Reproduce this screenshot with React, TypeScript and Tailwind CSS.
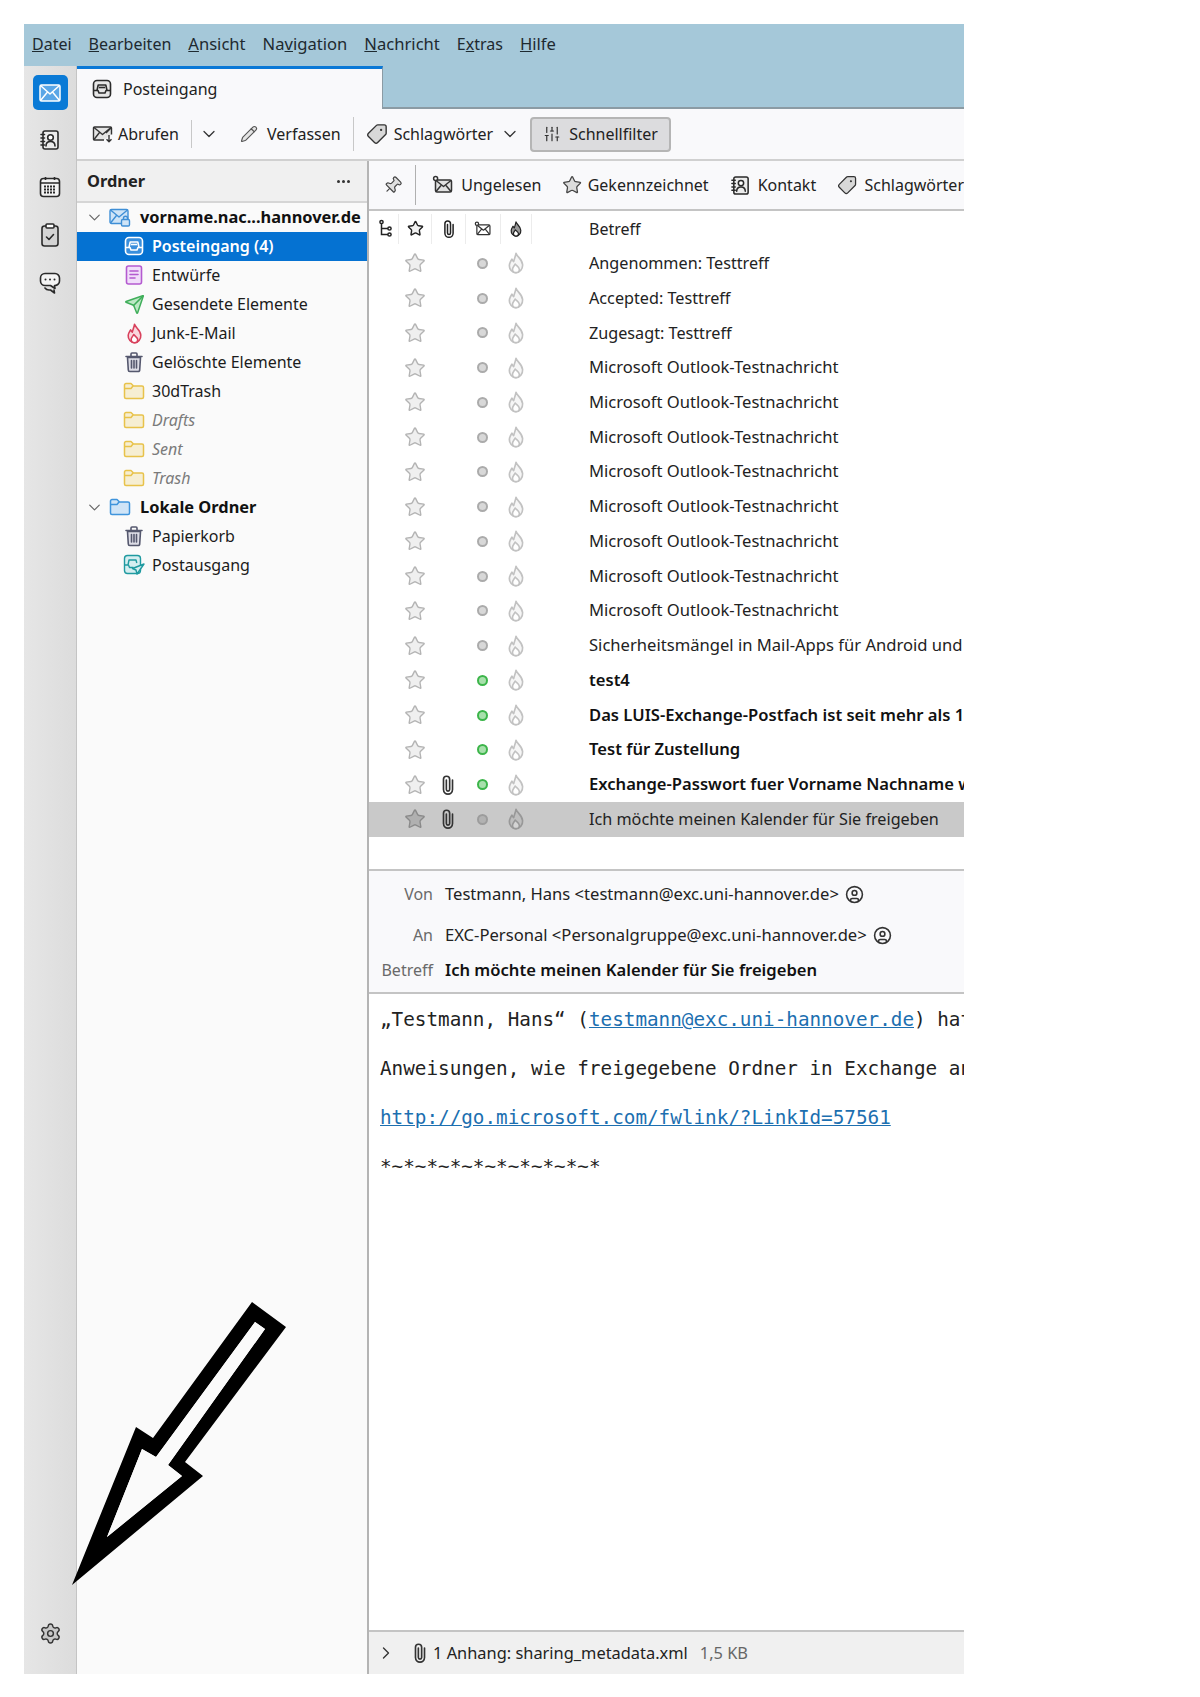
import { ChevronDown, ChevronRight, Settings, Pencil, Tag, Star, Pin, SlidersVertical, Send, CircleUser } from 'lucide-react';

const FONT = 'font-["Noto_Sans","Open_Sans",sans-serif]';

function InboxIcon({ size = 20, color = '#2b2b2b', fill = '#e6e6e6' }: { size?: number; color?: string; fill?: string }) {
  return (
    <svg width={size} height={size} viewBox="0 0 20 20" fill="none" stroke={color} strokeWidth="1.6" strokeLinejoin="round" className="shrink-0">
      <rect x="1.5" y="1.5" width="17" height="17" rx="3.5" fill={fill} />
      <path d="M1.5 11.5h4.5l1 2.5h6l1-2.5h4.5" />
      <path d="M5 11.5l1.2-5.5h7.6l1.2 5.5" />
      <path d="M7 8.5h6" />
    </svg>
  );
}

function ClipIcon({ size = 20, color = '#333' }: { size?: number; color?: string }) {
  return (
    <svg width={size} height={size} viewBox="0 0 20 20" fill="none" stroke={color} strokeWidth="1.5" strokeLinecap="round" className="shrink-0">
      <path d="M8.5 5.5v8.5a1.5 1.5 0 0 0 3 0V4.8a2.8 2.8 0 0 0-5.6 0v9.4a4.1 4.1 0 0 0 8.2 0V5.5" />
    </svg>
  );
}

function FlameIcon({ size = 22, color = '#c2c2c2', fill = '#f6f6f6', inner = '#ffffff' }: { size?: number; color?: string; fill?: string; inner?: string }) {
  return (
    <svg width={size} height={size} viewBox="0 0 20 20" stroke={color} strokeWidth="1.5" strokeLinejoin="round" className="shrink-0">
      <path d="M10 1.2c.8 3 5.6 5.2 6 10.3.3 3.8-2.6 7.3-6 7.3s-6.300-3.100-6-7c.2-2.300 1.400-3.700 2.300-5.300.4 1 1 1.700 1.600 2.200.6-2.500 1.600-4.600 2.100-7.500z" fill={fill} />
      <path d="M10 18.800c-1.800 0-3.200-1.400-3.200-3.100 0-1.700 1.500-2.700 2.400-4.700 1.300 1.600 3.900 2.800 3.900 4.900 0 1.600-1.400 2.900-3.100 2.900z" fill={inner} />
    </svg>
  );
}

function MailFetchIcon() {
  return (
    <svg width="22" height="20" viewBox="0 0 22 20" fill="none" stroke="#333" strokeWidth="1.4" strokeLinejoin="round" className="shrink-0">
      <path d="M12 16H2.500a1 1 0 0 1-1-1V4a1 1 0 0 1 1-1h16a1 1 0 0 1 1 1v6.500" fill="#e4e4e4" />
      <path d="M2 3.500l8.500 7 8.500-7M2 15.500l5.500-7M19 4l-5 5" />
      <path d="M17 11v6.500M14.500 15.200l2.500 2.500 2.500-2.500" />
    </svg>
  );
}

function UnreadIcon({ size = 22, dark = false }: { size?: number; dark?: boolean }) {
  return (
    <svg width={size} height={size} viewBox="0 0 22 22" fill="none" stroke="#333" strokeWidth="1.5" strokeLinejoin="round" className="shrink-0">
      <rect x="3.500" y="6" width="16" height="12" rx="1.500" fill={dark ? '#fff' : '#e2e2e2'} />
      <path d="M4 6.500l7.500 6 7.500-6M4 17.500l5-6M19 17.500l-5-6" />
      <circle cx="3.600" cy="4.600" r="2" fill="#fff" />
    </svg>
  );
}

function ThreadIcon() {
  return (
    <svg width="16" height="20" viewBox="0 0 16 20" fill="none" stroke="#222" strokeWidth="1.500" className="shrink-0">
      <circle cx="3.500" cy="3" r="1.600" />
      <path d="M3.500 4.600V15.500H10M3.500 9.500H10" />
      <circle cx="11.500" cy="9.500" r="1.600" />
      <circle cx="11.500" cy="15.500" r="1.600" />
    </svg>
  );
}

function AccountIcon() {
  return (
    <svg width="22" height="20" viewBox="0 0 22 20" fill="none" stroke="#3f8fd6" strokeWidth="1.400" strokeLinejoin="round" className="shrink-0">
      <rect x="1" y="2.500" width="18" height="14" rx="1.500" fill="#cfe4f7" />
      <path d="M1.500 3l8.500 7 8.500-7M1.500 16l6-7.500" />
      <rect x="12.500" y="12.500" width="8" height="6.500" rx="1.200" fill="#cfe4f7" />
      <path d="M14.500 12.500v-1.200a2 2 0 0 1 4 0v1.200" />
    </svg>
  );
}

function OutboxIcon() {
  return (
    <svg width="22" height="22" viewBox="0 0 22 22" fill="none" stroke="#1f9aa0" strokeWidth="1.400" strokeLinejoin="round" className="shrink-0">
      <rect x="1.500" y="1.500" width="16" height="18" rx="3" fill="#d5eef0" />
      <path d="M1.500 11h4l1 2.500h4M5 11l1-5h7l.8 3" />
      <path d="M21 10L9.500 14.500l3.500 1.500 1 4z" fill="#d5eef0" />
    </svg>
  );
}

function FolderIcon({ color = '#e8c24a', fill = '#f6eed2' }: { color?: string; fill?: string }) {
  return (
    <svg width="22" height="20" viewBox="0 0 22 20" fill="none" stroke={color} strokeWidth="1.500" strokeLinejoin="round" className="shrink-0">
      <path d="M1.500 4a1.500 1.500 0 0 1 1.500-1.500h5l2.500 2.500H19a1.500 1.500 0 0 1 1.500 1.500v9.500A1.500 1.500 0 0 1 19 17.500H3A1.500 1.500 0 0 1 1.500 16z" fill={fill} />
      <path d="M1.500 7.500h6.500l2-2.500" />
    </svg>
  );
}

function TrashIcon() {
  return (
    <svg width="20" height="22" viewBox="0 0 20 22" fill="none" stroke="#55586e" strokeWidth="1.600" strokeLinejoin="round" strokeLinecap="round" className="shrink-0">
      <path d="M3.500 6.500h13l-.8 12.500a1.500 1.500 0 0 1-1.500 1.500H5.800A1.500 1.500 0 0 1 4.300 19z" fill="#dddde6" />
      <path d="M2 5.500h16M7 5V3a1 1 0 0 1 1-1h4a1 1 0 0 1 1 1v2" />
      <path d="M7.500 9.500v7.500M10 9.500v7.500M12.500 9.500v7.500" />
    </svg>
  );
}

function DraftIcon() {
  return (
    <svg width="20" height="20" viewBox="0 0 20 20" fill="none" stroke="#b45ad0" strokeWidth="1.600" strokeLinecap="round" className="shrink-0">
      <rect x="2.500" y="1" width="15" height="18" rx="2" fill="#f1defa" />
      <path d="M6 6h8M6 9.500h8M6 13h5" />
    </svg>
  );
}

function MailSpaceIcon() {
  return (
    <svg width="22" height="18" viewBox="0 0 22 18" fill="none" stroke="#ffffff" strokeWidth="1.500" strokeLinejoin="round">
      <rect x="1" y="1" width="20" height="16" rx="1.500" fill="#5aa6e6" />
      <path d="M1.500 1.500L11 10l9.500-8.500M1.500 16.500L8.500 8M20.500 16.500L13.500 8" />
    </svg>
  );
}

function AddressBookIcon({ size = 22, className = '' }: { size?: number; className?: string }) {
  return (
    <svg width={size} height={size} viewBox="0 0 22 22" fill="none" stroke="#2a2a2a" strokeWidth="1.600" strokeLinecap="round" strokeLinejoin="round" className={`shrink-0 ${className}`}>
      <rect x="4" y="2" width="15" height="18" rx="2" fill="#ececec" />
      <path d="M2 5.500h3.500M2 9h3.500M2 12.500h3.500M2 16h3.500" />
      <circle cx="11.500" cy="8.500" r="2.800" fill="#ffffff" />
      <path d="M7 17c0-3 2-4.500 4.500-4.500S16 14 16 17" />
    </svg>
  );
}

function CalendarIcon() {
  return (
    <svg width="22" height="22" viewBox="0 0 22 22" fill="none" stroke="#2a2a2a" strokeWidth="1.600" strokeLinejoin="round" className="shrink-0">
      <rect x="1.500" y="2.500" width="19" height="18" rx="3" fill="#f4f4f4" />
      <path d="M1.500 7h19M6.500 1v3M15.500 1v3" />
      <path d="M5 10.500h12M5 13.500h12M5 16.500h12" strokeWidth="1.800" strokeDasharray="2 1" />
    </svg>
  );
}

function TasksIcon() {
  return (
    <svg width="22" height="24" viewBox="0 0 22 24" fill="none" stroke="#2a2a2a" strokeWidth="1.600" strokeLinejoin="round" strokeLinecap="round" className="shrink-0">
      <rect x="3" y="3" width="16" height="20" rx="2.500" fill="#d4d4d4" />
      <rect x="7" y="1" width="8" height="4" rx="1" fill="#ffffff" />
      <path d="M7.500 14l2.500 2.500 4.500-5" />
    </svg>
  );
}

function ChatIcon() {
  return (
    <svg width="22" height="22" viewBox="0 0 22 22" fill="none" stroke="#2a2a2a" strokeWidth="1.600" strokeLinejoin="round" strokeLinecap="round" className="shrink-0">
      <path d="M6 1.500h10a4.500 4.500 0 0 1 4.500 4.500v3a4.500 4.500 0 0 1-4.500 4.500h-.5l.5 3-4.500-3H6A4.500 4.500 0 0 1 1.500 9V6A4.500 4.500 0 0 1 6 1.500z" fill="#f4f4f4" />
      <path d="M6.500 7.500h.01M11 7.500h.01M15.500 7.500h.01" strokeWidth="2" />
      <path d="M6 16c1 1.500 2.500 2 4 2h1.500l4 3-.5-3" />
    </svg>
  );
}

function FolderRow({ label, icon, muted = false, selected = false }: { label: string; icon: React.ReactNode; muted?: boolean; selected?: boolean }) {
  return (
    <div className={`flex h-[28.9px] items-center pl-[43px] text-[16px] ${selected ? 'bg-[#0572d2] font-semibold text-white' : muted ? 'text-[#7b7b7b] italic' : 'text-[#1c1c1c]'}`}>
      <span className="flex w-[28px] shrink-0 items-center justify-center">{icon}</span>
      <span className="ml-[4px]">{label}</span>
    </div>
  );
}

const messages: { subject: string; green?: boolean; bold?: boolean; clip?: boolean; selected?: boolean; narrow?: boolean }[] = [
  { subject: 'Angenommen: Testtreff', narrow: true },
  { subject: 'Accepted: Testtreff', narrow: true },
  { subject: 'Zugesagt: Testtreff', narrow: true },
  ...Array.from({ length: 8 }, () => ({ subject: 'Microsoft Outlook-Testnachricht' })),
  { subject: 'Sicherheitsmängel in Mail-Apps für Android und' },
  { subject: 'test4', green: true, bold: true },
  { subject: 'Das LUIS-Exchange-Postfach ist seit mehr als 1', green: true, bold: true },
  { subject: 'Test für Zustellung', green: true, bold: true },
  { subject: 'Exchange-Passwort fuer Vorname Nachname wurde', green: true, bold: true, clip: true },
  { subject: 'Ich möchte meinen Kalender für Sie freigeben', clip: true, selected: true, narrow: true },
];

function MessageRow({ subject, green, bold, clip, selected, narrow }: (typeof messages)[number]) {
  return (
    <div className={`flex h-[34.75px] items-center whitespace-nowrap ${narrow ? 'text-[16.2px]' : 'text-[16.6px]'} ${selected ? 'bg-[#c9c9c9]' : ''}`}>
      <span className="w-[29px] shrink-0" />
      <span className="flex w-[33px] shrink-0 justify-center">
        <Star size={22} color={selected ? '#8a8a8a' : '#b4b4b4'} fill={selected ? '#b0b0b0' : '#efefef'} strokeWidth={1.5} />
      </span>
      <span className="flex w-[34px] shrink-0 justify-center">{clip && <ClipIcon size={22} />}</span>
      <span className="flex w-[35px] shrink-0 justify-center">
        <span className={`h-[11px] w-[11px] rounded-full border-[2.5px] ${selected ? 'border-[#9c9c9c] bg-[#b2b2b2]' : green ? 'border-[#3cb54a] bg-[#a8e0ac]' : 'border-[#ababab] bg-[#d8d8d8]'}`} />
      </span>
      <span className="flex w-[32px] shrink-0 justify-center">
        {selected ? <FlameIcon color="#989898" fill="#bebebe" inner="#d4d4d4" /> : <FlameIcon />}
      </span>
      <span className={`ml-[57px] ${bold ? 'font-semibold text-[#111]' : 'text-[#222]'}`}>{subject}</span>
    </div>
  );
}

function HeaderField({ label, children }: { label: string; children: React.ReactNode }) {
  return (
    <div className="flex items-center whitespace-nowrap text-[16px]">
      <span className="w-[64px] shrink-0 text-right text-[#6a6a6a]">{label}</span>
      <span className="ml-[12px] flex items-center gap-[6px] text-[16.6px] text-[#222]">{children}</span>
    </div>
  );
}

export default function App() {
  return (
    <div className={`relative h-[1697px] w-[1200px] overflow-hidden bg-white pl-[24px] pt-[24px] ${FONT}`}>
      <div className="flex h-[1650px] w-[940px] flex-col overflow-hidden">
        {/* Menu bar */}
        <div className="flex h-[42px] shrink-0 items-center gap-[17px] bg-[#a5c8d9] pb-[2px] pl-[8px] text-[16px] text-[#1e2a30]">
          <span><u>D</u>atei</span>
          <span><u>B</u>earbeiten</span>
          <span className="text-[16.6px]"><u>A</u>nsicht</span>
          <span className="text-[16.6px]">Na<u>v</u>igation</span>
          <span className="text-[16.6px]"><u>N</u>achricht</span>
          <span>E<u>x</u>tras</span>
          <span className="text-[16.6px]"><u>H</u>ilfe</span>
        </div>

        <div className="flex min-h-0 flex-1">
          {/* Spaces toolbar */}
          <div className="flex w-[53px] shrink-0 flex-col items-center border-r border-[#c4c4c4] bg-gradient-to-r from-[#e6e6e6] to-[#dcdcdc] pb-[29px] pt-[9px]">
            <div className="flex h-[35px] w-[35px] items-center justify-center rounded-[5px] bg-[#0a7ad6]">
              <MailSpaceIcon />
            </div>
            <div className="mt-[19px] flex flex-col items-center gap-[25px]">
              <AddressBookIcon />
              <CalendarIcon />
              <TasksIcon />
              <ChatIcon />
            </div>
            <Settings className="mt-auto" size={23} color="#333" fill="#c8c8c8" strokeWidth={1.5} />
          </div>

          <div className="flex min-w-0 flex-1 flex-col">
            {/* Tab bar */}
            <div className="flex h-[43px] shrink-0 border-b-2 border-[#8b9ba4] bg-[#a5c8d9]">
              <div className="-mb-[2px] flex w-[306px] items-center gap-[11px] border-r border-t-[3px] border-r-[#8b9ba4] border-t-[#0a78d6] bg-[#f9f9fb] pl-[15px] text-[16px] text-[#222]">
                <InboxIcon />
                Posteingang
              </div>
            </div>

            {/* Main toolbar */}
            <div className="flex h-[52px] shrink-0 items-center whitespace-nowrap border-b-2 border-[#d0d0d0] bg-[#f9f9fb] pl-[15px] text-[16px] text-[#222]">
              <MailFetchIcon />
              <span className="ml-[4px]">Abrufen</span>
              <span className="ml-[12px] h-[28px] w-px bg-[#c8c8c8]" />
              <ChevronDown className="ml-[7px]" size={20} color="#333" strokeWidth={1.5} />
              <Pencil className="ml-[21px]" size={18} color="#555" fill="#e4e4e4" strokeWidth={1.5} />
              <span className="ml-[9px]">Verfassen</span>
              <span className="ml-[12px] h-[34px] w-px bg-[#c8c8c8]" />
              <Tag className="ml-[12px] -scale-x-100" size={22} color="#333" fill="#d8d8d8" strokeWidth={1.5} />
              <span className="ml-[6px]">Schlagwörter</span>
              <ChevronDown className="ml-[7px]" size={20} color="#333" strokeWidth={1.5} />
              <div className="ml-[10px] flex h-[35px] w-[141px] items-center gap-[8px] rounded-[4px] border-2 border-[#b5b5b5] bg-[#dcdcde] pl-[11px]">
                <SlidersVertical size={18} color="#333" strokeWidth={1.6} />
                Schnellfilter
              </div>
            </div>

            <div className="flex min-h-0 flex-1">
              {/* Folder pane */}
              <div className="flex w-[292px] shrink-0 flex-col border-r-2 border-[#b4b4b4] bg-[#fafafa]">
                <div className="flex h-[42px] shrink-0 items-center justify-between border-b-2 border-[#d6d6d6] bg-[#f0f0f0] pl-[10px] pr-[17px] text-[16.4px] font-bold text-[#222]">
                  Ordner
                  <span className="flex gap-[2px]">
                    <span className="h-[3px] w-[3px] rounded-full bg-[#333]" />
                    <span className="h-[3px] w-[3px] rounded-full bg-[#333]" />
                    <span className="h-[3px] w-[3px] rounded-full bg-[#333]" />
                  </span>
                </div>
                <div className="flex h-[28px] shrink-0 items-center whitespace-nowrap pl-[8px] text-[16.4px] font-bold text-[#111]">
                  <ChevronDown size={19} color="#666" strokeWidth={1.5} />
                  <span className="ml-[5px]"><AccountIcon /></span>
                  <span className="ml-[9px]">vorname.nac...hannover.de</span>
                </div>
                <div className="h-[1px] shrink-0" />
                <FolderRow label="Posteingang (4)" selected icon={<InboxIcon color="#ffffff" fill="#3a8fdc" />} />
                <FolderRow label="Entwürfe" icon={<DraftIcon />} />
                <FolderRow label="Gesendete Elemente" icon={<Send size={21} color="#3fae5a" fill="#bde8c5" strokeWidth={1.7} />} />
                <FolderRow label="Junk-E-Mail" icon={<FlameIcon size={21} color="#d8415c" fill="#f9d7dd" />} />
                <FolderRow label="Gelöschte Elemente" icon={<TrashIcon />} />
                <FolderRow label="30dTrash" icon={<FolderIcon />} />
                <FolderRow label="Drafts" muted icon={<FolderIcon />} />
                <FolderRow label="Sent" muted icon={<FolderIcon />} />
                <FolderRow label="Trash" muted icon={<FolderIcon />} />
                <div className="mt-[1px] flex h-[28.9px] shrink-0 items-center pl-[8px] text-[16.4px] font-bold text-[#111]">
                  <ChevronDown size={19} color="#666" strokeWidth={1.5} />
                  <span className="ml-[5px]"><FolderIcon color="#3f94dc" fill="#cfe4f7" /></span>
                  <span className="ml-[9px]">Lokale Ordner</span>
                </div>
                <FolderRow label="Papierkorb" icon={<TrashIcon />} />
                <FolderRow label="Postausgang" icon={<OutboxIcon />} />
              </div>

              {/* Message side */}
              <div className="flex min-w-0 flex-1 flex-col bg-white">
                {/* Quick filter bar */}
                <div className="flex h-[50px] shrink-0 items-center whitespace-nowrap border-b-2 border-[#c4c4c4] bg-[#f9f9fb] pl-[14px] text-[16px] text-[#222]">
                  <Pin className="rotate-45" size={21} color="#444" fill="#e0e0e0" strokeWidth={1.5} />
                  <span className="ml-[13px] h-[40px] w-px bg-[#b0b0b0]" />
                  <span className="ml-[16px]"><UnreadIcon /></span>
                  <span className="ml-[7px]">Ungelesen</span>
                  <Star className="ml-[21px]" size={22} color="#444" fill="#dcdcdc" strokeWidth={1.5} />
                  <span className="ml-[5px]">Gekennzeichnet</span>
                  <AddressBookIcon className="ml-[21px]" size={21} />
                  <span className="ml-[7px]">Kontakt</span>
                  <Tag className="ml-[21px] -scale-x-100" size={22} color="#333" fill="#d8d8d8" strokeWidth={1.5} />
                  <span className="ml-[7px]">Schlagwörter</span>
                </div>

                {/* Thread pane */}
                <div className="flex h-[35px] shrink-0 items-center whitespace-nowrap text-[16px] text-[#222]">
                  <span className="flex w-[29px] shrink-0 justify-center pl-[4px]"><ThreadIcon /></span>
                  <span className="flex h-[30px] w-[33px] shrink-0 items-center justify-center border-l border-[#ececec]"><Star size={17} color="#222" fill="#f2f2f2" strokeWidth={2} /></span>
                  <span className="flex h-[30px] w-[34px] shrink-0 items-center justify-center border-l border-[#ececec]"><ClipIcon size={20} color="#222" /></span>
                  <span className="flex h-[30px] w-[35px] shrink-0 items-center justify-center border-l border-[#ececec]"><UnreadIcon size={18} dark /></span>
                  <span className="flex h-[30px] w-[32px] shrink-0 items-center justify-center border-x border-[#ececec]"><FlameIcon size={16} color="#222" fill="#999" inner="#fff" /></span>
                  <span className="ml-[57px]">Betreff</span>
                </div>
                <div className="shrink-0 overflow-hidden">
                  {messages.map((m, i) => (
                    <MessageRow key={i} {...m} />
                  ))}
                </div>

                {/* Message header */}
                <div className="mt-[32px] flex h-[125px] shrink-0 flex-col border-y-2 border-[#c4c4c4] bg-[#f9f9fb] pt-[11px]">
                  <HeaderField label="Von">
                    Testmann, Hans &lt;testmann@exc.uni-hannover.de&gt;
                    <CircleUser size={19} color="#333" strokeWidth={2} />
                  </HeaderField>
                  <div className="mt-[16px]">
                    <HeaderField label="An">
                      EXC-Personal &lt;Personalgruppe@exc.uni-hannover.de&gt;
                      <CircleUser size={19} color="#333" strokeWidth={2} />
                    </HeaderField>
                  </div>
                  <div className="mt-[10px]">
                    <HeaderField label="Betreff">
                      <span className="font-semibold text-[#111]">Ich möchte meinen Kalender für Sie freigeben</span>
                    </HeaderField>
                  </div>
                </div>

                {/* Body */}
                <div className="flex min-h-0 flex-1 flex-col gap-[27px] overflow-hidden whitespace-nowrap bg-white pl-[11px] pt-[15px] font-['DejaVu_Sans_Mono',monospace] text-[19.3px] leading-[22px] text-[#222]">
                  <div>„Testmann, Hans“ (<span className="text-[#1c6fb0] underline">testmann@exc.uni-hannover.de</span>) hat</div>
                  <div>Anweisungen, wie freigegebene Ordner in Exchange an</div>
                  <div className="text-[#1c6fb0] underline">http://go.microsoft.com/fwlink/?LinkId=57561</div>
                  <div>*~*~*~*~*~*~*~*~*~*</div>
                </div>

                {/* Attachment bar */}
                <div className="flex h-[44px] shrink-0 items-center whitespace-nowrap border-t-2 border-[#c4c4c4] bg-[#f0f0f0] pl-[7px] text-[16.4px] text-[#222]">
                  <ChevronRight size={20} color="#333" strokeWidth={1.6} />
                  <span className="ml-[13px]"><ClipIcon size={22} /></span>
                  <span className="ml-[2px]">1 Anhang: sharing_metadata.xml</span>
                  <span className="ml-[12px] text-[#666]">1,5 KB</span>
                </div>
              </div>
            </div>
          </div>
        </div>
      </div>

      {/* Annotation arrow drawn over the window */}
      <svg className="absolute left-0 top-0" width="300" height="1600" viewBox="0 0 300 1600">
        <path
          fillRule="evenodd"
          fill="#000"
          d="M252 1302L286 1327L185 1462L203 1476L72 1585L136 1427L153 1438ZM255 1322L156 1457L142 1449L107 1537L182 1476L168 1465L265 1329Z"
        />
        <path fill="#fafafa" d="M255 1322L156 1457L142 1449L107 1537L182 1476L168 1465L265 1329Z" />
      </svg>
    </div>
  );
}
